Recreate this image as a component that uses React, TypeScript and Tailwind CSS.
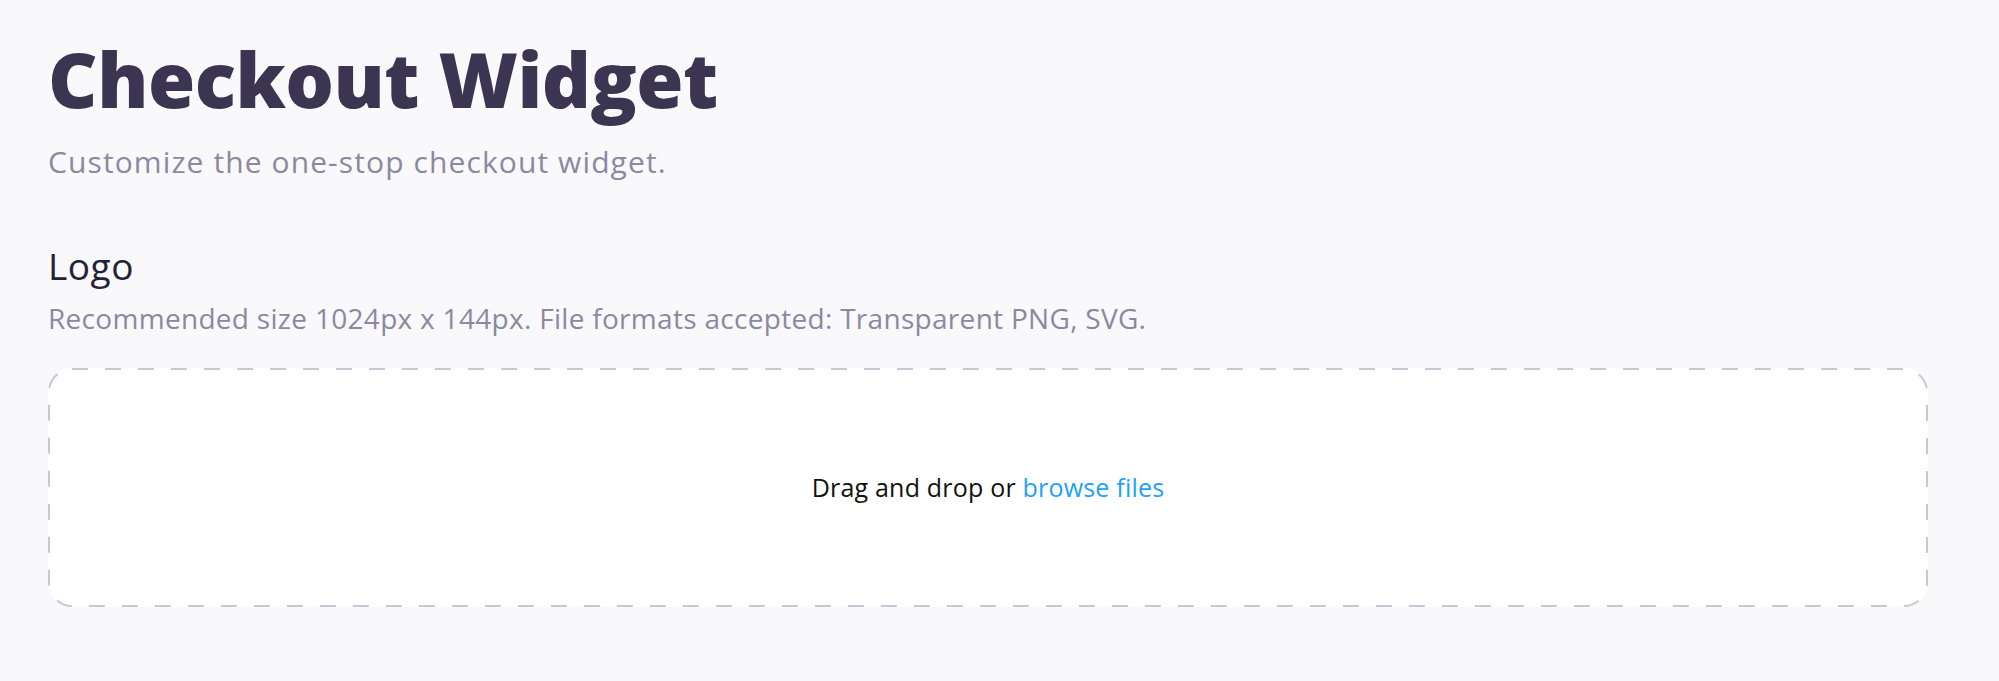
import React from "react";

export default function App() {
  return (
    <div
      className="min-h-[681px] w-full bg-[#f9f9fb] pl-[48px] pr-[72px] pt-[40px]"
      style={{ fontFamily: "'Open Sans', Lato, sans-serif" }}
    >
      <h1 className="text-[76.5px] font-extrabold leading-none tracking-[-0.5px] text-[#3b3551]">
        Checkout Widget
      </h1>
      <p className="mt-[30px] text-[30px] leading-none tracking-[1.1px] text-[#8c88a2]">
        Customize the one-stop checkout widget.
      </p>
      <h2 className="mt-[70px] text-[37px] font-normal leading-none tracking-[0.5px] text-[#25213a]">
        Logo
      </h2>
      <p className="mt-[20px] text-[28px] leading-none tracking-[0.3px] text-[#8c88a2]">
        Recommended size 1024px x 144px. File formats accepted: Transparent PNG, SVG.
      </p>
      <div className="relative mt-[36px] flex h-[239px] w-[1880px] items-center justify-center rounded-[24px] bg-white">
        <svg
          className="pointer-events-none absolute inset-0 h-full w-full"
          xmlns="http://www.w3.org/2000/svg"
        >
          <rect
            x="1"
            y="1"
            width="1878"
            height="237"
            rx="23"
            ry="23"
            fill="none"
            stroke="#c9c7d5"
            strokeWidth="2"
            strokeDasharray="16 17"
          />
        </svg>
        <span className="text-[25px] leading-none tracking-[0.2px] text-[#111111]">
          Drag and drop or <span className="text-[#1ea1f7]">browse files</span>
        </span>
      </div>
    </div>
  );
}
